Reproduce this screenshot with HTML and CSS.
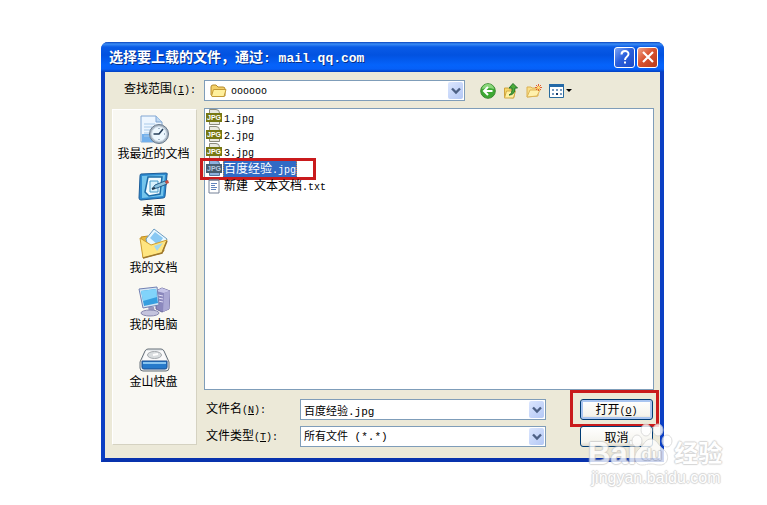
FILE: index.html
```html
<!DOCTYPE html>
<html lang="zh-CN">
<head>
    <meta charset="utf-8">
    <title>选择要上载的文件</title>
    <link rel="stylesheet" href="styles.css">
</head>
<body>
    <div class="dialog">
        <div class="titlebar">
            <h1>选择要上载的文件，通过<span class="en">: mail.qq.com</span></h1>
            <button type="button" class="title_button" aria-label="帮助">
                <svg width="16" height="16" viewBox="0 0 16 16" fill="none" stroke="#fff" stroke-width="2"><path d="M4.5 5.5C4.5 1 11.5 1 11.5 5c0 3-3.5 2.500-3.500 6M8 12.500v2"/></svg>
            </button>
            <button type="button" class="title_button close" aria-label="关闭">
                <svg width="16" height="16" viewBox="0 0 16 16" stroke="#fff" stroke-width="2.200"><path d="M3 3l10 10M13 3L3 13"/></svg>
            </button>
        </div>

        <form class="content">
            <div class="toolbar">
                <label for="lookIn">查找范围<span class="en">(<u>I</u>):</span></label>
                <div class="combo look_in">
                    <svg class="folder" width="17" height="16" viewBox="0 0 17 16"><path d="M1 12V4q0-2 2-2h3l2 2h5q2 0 2 2v7H2z" fill="#f3d06a" stroke="#b58a2b"/><path d="M1.500 13L3.500 6.500H16L14 13.500H2z" fill="#fff09d" stroke="#c49a36"/></svg>
                    <select id="lookIn"><option>oooooo</option></select>
                    <span class="arrow"><svg width="10" height="8" viewBox="0 0 10 8"><path d="M1 1.500l4 4 4-4" fill="none" stroke="#4d6185" stroke-width="2.400"/></svg></span>
                </div>
                <div class="tools">
                    <button type="button" aria-label="后退">
                        <svg width="16" height="16" viewBox="0 0 16 16"><circle cx="8" cy="8" r="7.300" fill="#3da833" stroke="#3c8a32"/><path d="M2 6a6 5 0 0 1 12 0q-6-2-12 0" fill="#8bd77c"/><path d="M12.500 8H4M8 4L4 8l4 4" fill="none" stroke="#fff" stroke-width="2"/></svg>
                    </button>
                    <button type="button" aria-label="向上">
                        <svg width="16" height="16" viewBox="0 0 16 16"><path d="M1.500 14V5h4l1 1h5v6l-1 3z" fill="#f5d869" stroke="#cfa23c"/><path d="M1.500 15l2-7h9l-2 7z" fill="#fff0a0" stroke="#d2a944"/><path d="M6 12q3.500-1 3-7H6L10 .5 14.500 5H12q0 7-6 7" fill="#4cad3a" stroke="#23722a"/></svg>
                    </button>
                    <button type="button" aria-label="新建文件夹">
                        <svg width="16" height="16" viewBox="0 0 16 16"><path d="M1 14V4h4l1 1h6v8z" fill="#f9df88" stroke="#dcb050"/><path d="M1 14l3-7h10l-3 6z" fill="#fff1ad" stroke="#dcb456"/><path d="M12.500 1v7M9 4.500h7M10 2l5 5M15 2l-5 5" stroke="#e3612e"/><circle cx="12.500" cy="4.500" r="1.500" fill="#ffe579"/></svg>
                    </button>
                    <button type="button" aria-label="查看">
                        <svg width="24" height="16" viewBox="0 0 24 16"><path d="M.5 1.500h14v13H.5z" fill="#fff" stroke="#286a9e"/><path d="M0 1h15v3H0z" fill="#256aa7"/><path d="M3 6h2v2H3zM7 6h2v2H7zM11 6h2v2h-2zM3 10h2v2H3zM11 10h2v2h-2z" fill="#779abe"/><path d="M7 10h2v2H7z" fill="#123b6c"/><path d="M17 6h6l-3 3z"/></svg>
                    </button>
                </div>
            </div>

            <nav class="places">
                <button type="button">
                    <svg width="32" height="32" viewBox="0 0 32 32"><path d="M3 2h15l6 6v20H3z" fill="#edf6ff" stroke="#82a7d3"/><path d="M4 20h19v8H4z" fill="#73b0ec"/><path d="M18 2v6h6" fill="#bdd8f2" stroke="#82a7d3"/><path d="M6 10h11M6 13h8M6 16h6M6 19h5M6 22h6" stroke="#a9cae9"/><circle cx="21" cy="20" r="9.500" fill="#a9b6c3" stroke="#68798b"/><circle cx="21" cy="20" r="7.300" fill="#edf8ff" stroke="#d4e1ec"/><path d="M21 14v1M21 25v1M15 20h1M26 20h1" stroke="#56738d"/><path d="M25 15l-4 5h-5" fill="none" stroke="#263f5a" stroke-width="1.600"/></svg>
                    <span>我最近的文档</span>
                </button>
                <button type="button">
                    <svg width="32" height="32" viewBox="0 0 32 32"><path d="M3 3l25-1q2 0 1 2l-2 21q0 2-2 2L3 29q-2 0-2-2L2 5q0-2 1-2" fill="#2d8bd0" stroke="#1c5d99"/><path d="M4 5l23-1-2 21-21 2z" fill="#75c5ec"/><path d="M10 6h14l-2 17-11 2-4-4z" fill="#f1fbff" stroke="#1d6da8" stroke-width="1.500"/><path d="M12 10h8v11h-8z" fill="#d8f2fd" stroke="#469ac8"/><path d="M14 18l3-4 10-4 2 3-10 4z" fill="#8cc4df" stroke="#285f8b"/><path d="M27 10l3-1 1 3-3 1z" fill="#c44f43"/><path d="M14 18l3-1" stroke="#263d4e" stroke-width="2"/></svg>
                    <span>桌面</span>
                </button>
                <button type="button">
                    <svg width="32" height="32" viewBox="0 0 32 32"><path d="M3 9l7-1 3 3 10-1 3 13L5 29z" fill="#e7b83e" stroke="#c28e25"/><path d="M8 11l8-10 13 10-5 14-13-2z" fill="#e9f8ff" stroke="#6c9cc2"/><path d="M12 10l5-6 8 6-5 7z" fill="#88c8f3"/><path d="M2 10l11 7 16-5-5 13L5 30z" fill="#ffe580" stroke="#cd9e35"/><path d="M16 18l9-3-6 8z" fill="#a5d8ee"/><path d="M5 30l19-5 5-12" fill="none" stroke="#9e782d" stroke-width="1.500"/></svg>
                    <span>我的文档</span>
                </button>
                <button type="button">
                    <svg width="32" height="32" viewBox="0 0 32 32"><path d="M18 6l6-3 8 3-1 18-7 3-6-3z" fill="#8b88bd" stroke="#696799"/><path d="M18 6l6-3 8 3-6 2z" fill="#c6c5e8"/><path d="M26 8l6-2-1 18-6 3z" fill="#aaa8d4"/><path d="M20 10l5 1M20 13l5 1M20 16l5 1" stroke="#e0def5"/><path d="M10 21l6 1 1 5-6 1z" fill="#9998be"/><ellipse cx="12" cy="28" rx="9" ry="3" fill="#c4c3dd" stroke="#8685ad"/><path d="M1 4l18-2 2 18-16 3z" fill="#d4e6f5" stroke="#7381b3"/><path d="M3 6l15-2 2 14-14 3z" fill="#369edf"/><path d="M3 6l15-2 1 8-14 4z" fill="#81d3fa"/></svg>
                    <span>我的电脑</span>
                </button>
                <button type="button">
                    <svg width="32" height="32" viewBox="0 0 32 32"><path d="M7 9q1-2 3-2h13q2 0 3 2l5 11v6q0 3-3 3H5q-3 0-3-3v-6z" fill="#e4e8eb" stroke="#677079"/><path d="M8 9h17l4 10H4z" fill="#fafafa"/><ellipse cx="16.500" cy="13" rx="7" ry="3.500" fill="#d9dddf" stroke="#a5aaae"/><path d="M15 13l5-1" stroke="#fff" stroke-width="2"/><path d="M4 19h25v6q0 2-2 2H6q-2 0-2-2z" fill="#267acb" stroke="#1a4f91"/><path d="M5 20h23v2H5z" fill="#88c4f0"/></svg>
                    <span>金山快盘</span>
                </button>
            </nav>

            <div class="main">
                <ul class="files">
                    <li><i class="jpg">JPG</i><span class="name"><span class="en">1.jpg</span></span></li>
                    <li><i class="jpg">JPG</i><span class="name"><span class="en">2.jpg</span></span></li>
                    <li><i class="jpg">JPG</i><span class="name"><span class="en">3.jpg</span></span></li>
                    <li class="selected"><i class="jpg">JPG</i><span class="name">百度经验<span class="en">.jpg</span></span></li>
                    <li>
                        <svg width="16" height="16" viewBox="0 0 16 16"><path d="M3 2h10v13H3z" fill="#fff" stroke="#748197"/><path d="M4 1v2M6 1v2M8 1v2M10 1v2M12 1v2" stroke="#68778e"/><path d="M5 5.500h6M5 7.500h4M5 9.500h6M5 11.500h5" stroke="#6285bd"/></svg>
                        <span class="name">新建<span class="en"> </span>文本文档<span class="en">.txt</span></span>
                    </li>
                </ul>

                <div class="fields">
                    <label for="fileName">文件名<span class="en">(<u>N</u>):</span></label>
                    <div class="combo">
                        <input type="text" id="fileName" value="百度经验.jpg">
                        <span class="arrow"><svg width="10" height="8" viewBox="0 0 10 8"><path d="M1 1.500l4 4 4-4" fill="none" stroke="#4d6185" stroke-width="2.400"/></svg></span>
                    </div>
                    <button type="button" class="button default">打开<span class="en">(<u>O</u>)</span></button>

                    <label for="fileType">文件类型<span class="en">(<u>T</u>):</span></label>
                    <div class="combo">
                        <select id="fileType"><option>所有文件 (*.*)</option></select>
                        <span class="arrow"><svg width="10" height="8" viewBox="0 0 10 8"><path d="M1 1.500l4 4 4-4" fill="none" stroke="#4d6185" stroke-width="2.400"/></svg></span>
                    </div>
                    <button type="button" class="button">取消</button>
                </div>
            </div>
        </form>

        <div class="watermark">
            <div class="brand">
                <span>Bai</span>
                <span class="paw">
                    <svg width="42" height="44" viewBox="0 0 42 44"><ellipse cx="6" cy="18" rx="5" ry="6"/><ellipse cx="15" cy="7" rx="5" ry="6"/><ellipse cx="27" cy="7" rx="5" ry="6"/><ellipse cx="36" cy="18" rx="5" ry="6"/><path d="M20 16c6 0 7 6 12 10 7 5 6 16-3 16-5 0-5-1-9-1s-5 1-9 1C2 42 2 31 8 26c5-4 6-10 12-10z"/></svg>
                    <b>du</b>
                </span>
                <span class="brand_cn">经验</span>
            </div>
            <div class="site">jingyan.baidu.com</div>
        </div>
    </div>
</body>
</html>
```

FILE: styles.css
```css
body {
    min-height: 100vh;
    margin: 0;
    padding: 42px 103px 0 101px;
    box-sizing: border-box;
    background: #fff;
    font-family: "Noto Sans CJK SC", sans-serif;
    font-size: 12px;
    line-height: 16px;
    color: #000;
}
button, input, select {
    font: inherit;
    color: inherit;
}
.en {
    font-family: "Liberation Mono", monospace;
    font-size: 10px;
    white-space: pre;
}
.dialog {
    position: relative;
    background: #ece9d8;
    border: 4px solid #0b3fc4;
    border-top: 0;
    border-bottom-color: #0832ad;
    border-radius: 7px 7px 0 0;
}

/* title bar */
.titlebar {
    display: flex;
    align-items: center;
    gap: 2px;
    height: 30px;
    margin: 0 -4px;
    padding: 0 6px 0 8px;
    box-sizing: border-box;
    border-radius: 7px 7px 0 0;
    background: linear-gradient(#0a45bd 0, #3a8cf5 2px, #0a5be6 5px, #0252e0 13px, #0563fb 23px, #0660f8 27px, #0340c0 30px);
}
.titlebar h1 {
    flex: 1;
    margin: 0;
    font-size: 14px;
    font-weight: bold;
    line-height: 20px;
    color: #fff;
    text-shadow: 1px 1px 0 #0a2f86;
    white-space: nowrap;
}
.titlebar .en {
    font-size: 13px;
}
.title_button {
    display: flex;
    align-items: center;
    justify-content: center;
    width: 21px;
    height: 21px;
    padding: 0;
    border: 1px solid #fff;
    border-radius: 3px;
    background: linear-gradient(135deg, #7da5f5, #2b60dd 45%, #1c4ac4);
}
.close {
    background: linear-gradient(135deg, #f0a288, #d9532f 45%, #b73a1c);
}

.content {
    display: grid;
    grid-template-columns: 85px 1fr;
    gap: 7px;
    padding: 8px 6px 11px 7px;
}

/* look in row */
.toolbar {
    grid-column: 1 / 3;
    display: flex;
    align-items: center;
    padding-left: 12px;
}
.toolbar label {
    width: 80px;
    margin-top: -2px;
}
.combo {
    display: flex;
    align-items: center;
    box-sizing: border-box;
    height: 21px;
    padding: 1px;
    border: 1px solid #7f9db9;
    background: #fff;
}
.combo input, .combo select {
    flex: 1;
    min-width: 0;
    height: 17px;
    padding: 0 2px;
    border: 0;
    outline: 0;
    appearance: none;
    background: none;
    font-family: "Liberation Mono", "Noto Sans CJK SC", monospace;
    font-size: 11px;
}
.look_in {
    flex: 0 1 261px;
}
.look_in select {
    padding-top: 2px;
    font-size: 10px;
}
.folder {
    margin: 0 2px 0 4px;
}
.arrow {
    display: flex;
    align-items: center;
    justify-content: center;
    width: 15px;
    height: 17px;
    border-radius: 2px;
    background: linear-gradient(135deg, #dbe6fe, #b4c8f5);
}
.tools {
    display: flex;
    gap: 7px;
    margin-left: 15px;
}
.tools button {
    display: flex;
    padding: 0;
    border: 0;
    background: none;
}

/* places bar */
.places {
    display: flex;
    flex-direction: column;
    padding-top: 4px;
    margin: 1px 0 2px;
    background: #f9f8f3;
    border: 1px solid #fff;
    border-right-color: #d5d2c1;
    border-bottom-color: #d5d2c1;
    box-sizing: border-box;
}
.places button {
    display: flex;
    flex-direction: column;
    align-items: center;
    height: 57px;
    padding: 0 2px 0 0;
    border: 0;
    background: none;
    white-space: nowrap;
}
.places span {
    line-height: 14px;
}

/* file list */
.main {
    min-width: 0;
}
.files {
    list-style: none;
    min-height: 279px;
    margin: 0;
    padding: 0 1px 1px;
    border: 1px solid #7f9db9;
    background: #fff;
}
.files li {
    position: relative;
    display: flex;
    align-items: center;
    gap: 1px;
    height: 17px;
}
.name {
    padding: 0 1px;
    line-height: 15px;
    white-space: nowrap;
}
/* small page with the type printed on a band */
.jpg {
    position: relative;
    z-index: 0;
    width: 16px;
    height: 9px;
    background: #777812;
    color: #fff;
    font: bold 7px/9px "Liberation Sans", sans-serif;
    text-align: center;
}
.jpg::before {
    content: "";
    position: absolute;
    z-index: -2;
    inset: -4px 2px -3px 3px;
    border: 1px solid #8b8b7c;
    border-top-right-radius: 4px;
    background: #e9e9df;
}
.jpg::after {
    content: "";
    position: absolute;
    z-index: -1;
    inset: 0;
    background: #777812;
}
.selected .jpg, .selected .jpg::after {
    background: #465d70;
    color: #b9cbe0;
}
.selected .jpg::before {
    background: #8fb0dc;
    border-color: #54779f;
}
.selected .name {
    background: #316ac5;
    outline: 1px dotted #c98b3a;
    outline-offset: -1px;
    color: #fff;
}
.selected::after {
    content: "";
    position: absolute;
    top: -2px;
    left: -6px;
    width: 110px;
    height: 16px;
    border: 3px solid #c91a1c;
}

/* name, type and buttons */
.fields {
    display: grid;
    grid-template-columns: 94px 1fr 73px;
    align-items: center;
    row-gap: 6px;
    padding: 9px 1px 0 2px;
}
.fields .combo {
    margin-right: 34px;
}
.button {
    position: relative;
    height: 21px;
    padding: 0;
    border: 1px solid #003c74;
    border-radius: 3px;
    background: linear-gradient(#fff, #f5f4ed 80%, #ddd8cb);
    line-height: 17px;
}
.default {
    box-shadow: inset 0 0 0 2px #a9c5f0;
}
.default::after {
    content: "";
    position: absolute;
    inset: -10px -7px -8px -11px;
    border: 3px solid #c91a1c;
}

.watermark {
    position: absolute;
    right: -64px;
    bottom: -31px;
    width: 136px;
    color: #fff;
    font-family: "Liberation Sans", "Noto Sans CJK SC", sans-serif;
    text-shadow: 1px 0 1px #ccc, -1px 0 1px #ccc, 0 1px 1px #ccc, 0 -1px 1px #ccc;
    opacity: 0.8;
    pointer-events: none;
}
.brand {
    display: flex;
    align-items: flex-end;
    height: 44px;
    font-size: 31px;
    font-weight: bold;
    line-height: 26px;
}
.paw {
    position: relative;
    display: flex;
    margin: 0 1px 0 -5px;
}
.paw svg {
    fill: #fff;
    stroke: #d6d6d6;
}
.paw b {
    position: absolute;
    left: 10px;
    bottom: 4px;
    font-size: 17px;
    line-height: 17px;
}
.brand_cn {
    font-size: 24px;
}
.site {
    font-size: 16px;
    line-height: 22px;
    text-align: center;
}
```
